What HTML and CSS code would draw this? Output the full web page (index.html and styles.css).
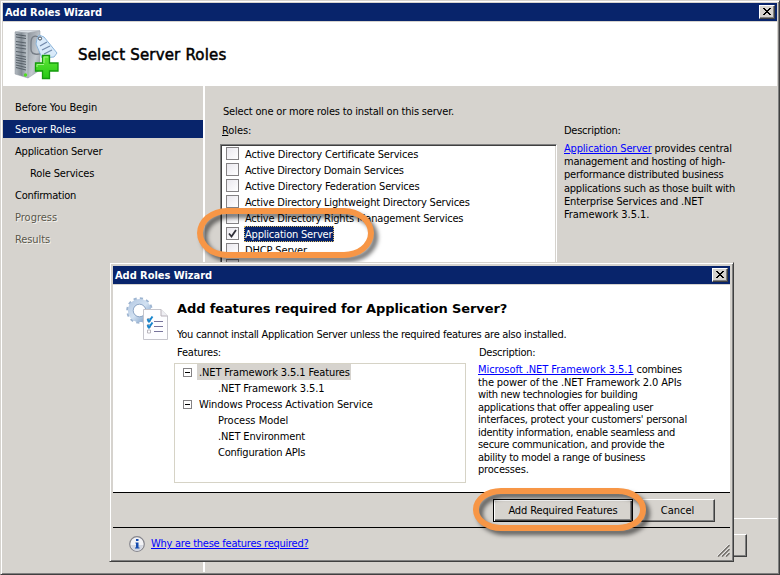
FILE: index.html
```html
<!DOCTYPE html>
<html lang="en">
<head>
<meta charset="utf-8">
<title>Add Roles Wizard</title>
<link rel="stylesheet" href="styles.css">
</head>
<body>
<div class="window main-window">
  <div class="titlebar"><span class="tr-05">Add Roles Wizard</span>
    <button class="close" aria-label="Close"><svg width="8" height="7" viewBox="0 0 8 7" shape-rendering="crispEdges"><path d="M0 0h2v1h-2zM6 0h2v1h-2zM1 1h2v1h-2zM5 1h2v1h-2zM2 2h4v1h-4zM3 3h2v1h-2zM2 4h4v1h-4zM1 5h2v1h-2zM5 5h2v1h-2zM0 6h2v1h-2zM6 6h2v1h-2z"/></svg></button>
  </div>
  <header class="banner">
    <svg class="server-icon" width="46" height="50" viewBox="0 0 46 50">
      <defs>
        <linearGradient id="front" x2="1" y2="0"><stop offset="0" stop-color="#b4bbc2"/><stop offset=".5" stop-color="#848d95"/><stop offset="1" stop-color="#c9d0d6"/></linearGradient>
        <linearGradient id="side" x2="1" y2="1"><stop offset="0" stop-color="#8f969e"/><stop offset=".6" stop-color="#c3c9cf"/><stop offset="1" stop-color="#858d95"/></linearGradient>
        <linearGradient id="plus" x2="0" y2="1"><stop offset="0" stop-color="#62e83a"/><stop offset="1" stop-color="#25c812"/></linearGradient>
      </defs>
      <path d="M1 2 7 .5H26L14 3z" fill="#dce2e7" stroke="#aab1b8" stroke-width=".5"/>
      <path d="M1 2 14 3V48L1 44z" fill="url(#front)" stroke="#8d959d" stroke-width=".5"/>
      <path d="M14 3 26 1V40L14 48z" fill="url(#side)" stroke="#9299a1" stroke-width=".5"/>
      <path d="M2 4.500 12 6M2 7 12 8.500" stroke="#535c64"/>
      <path d="M2 11.500 12 13M2 14.500 12 16M2 17.500 12 19M2 21.500 12 23M2 25 12 27M2 27.500 12 29.500M2 30 12 32M2 32.500 12 34.500M2 35 12 37.500M2 37.500 12 40" stroke="#59626a" stroke-width="1.200"/>
      <circle cx="11.500" cy="45" r="1.700" fill="#4fdc20"/>
      <path d="M26 8C20 4 17 7 17 13s-1 10 4 11 6-1 8-4" fill="none" stroke="#777e87" stroke-width="1.400"/>
      <path d="M23 9 25 5 30 7 43 23 40 27 28 28 22 14z" fill="#d9eafa" stroke="#8cb5da"/>
      <circle cx="26" cy="8.500" r="1.600" fill="#f8fcff" stroke="#404a57"/>
      <path d="M26 16 33 12M28 20 36 16M30 24 38 20" stroke="#7189aa" stroke-width="1.300"/>
      <path d="M28.500 25.500H35.500V33H44V41H35.500V48.500H28.500V41H21.500V33H28.500z" fill="url(#plus)" stroke="#159b0c" stroke-width="1.300"/>
      <path d="M30 33V27H34M23 37V34.500H30" fill="none" stroke="#a2f585"/>
    </svg>
    <h1 class="banner-title">Select Server Roles</h1>
  </header>
  <div class="body">
    <nav class="steps">
      <div class="step tr-10">Before You Begin</div>
      <div class="step current tr-10">Server Roles</div>
      <div class="step tr-20">Application Server</div>
      <div class="step sub tr-15">Role Services</div>
      <div class="step tr-25">Confirmation</div>
      <div class="step disabled">Progress</div>
      <div class="step disabled tr-10">Results</div>
    </nav>
    <main class="page">
      <div class="content">
        <section class="roles">
          <p class="intro tr-18">Select one or more roles to install on this server.</p>
          <p class="label tr-10"><u>R</u>oles:</p>
          <div class="listbox">
            <div class="row"><i class="check"></i><span class="tr-15">Active Directory Certificate Services</span></div>
            <div class="row"><i class="check"></i><span class="tr-22">Active Directory Domain Services</span></div>
            <div class="row"><i class="check"></i><span class="tr-15">Active Directory Federation Services</span></div>
            <div class="row"><i class="check"></i><span class="tr-20">Active Directory Lightweight Directory Services</span></div>
            <div class="row"><i class="check"></i><span class="tr-20">Active Directory Rights Management Services</span></div>
            <div class="row"><i class="check"><svg width="9" height="9" viewBox="0 0 9 9"><path d="M1 4.500 3.500 7.500 8 1" fill="none" stroke="#303038" stroke-width="1.800"/></svg></i><span class="chosen tr-20">Application Server</span></div>
            <div class="row"><i class="check"></i><span class="tr-15">DHCP Server</span></div>
            <div class="row"><i class="check"></i><span class="tr-15">DNS Server</span></div>
          </div>
        </section>
        <aside class="description">
          <p class="label tr-25">Description:</p>
          <p class="copy">
            <span class="line tr-18"><a>Application Server</a> provides central</span>
            <span class="line tr-25">management and hosting of high-</span>
            <span class="line tr-22">performance distributed business</span>
            <span class="line tr-25">applications such as those built with</span>
            <span class="line tr-15">Enterprise Services and .NET</span>
            <span class="line tr-05">Framework 3.5.1.</span>
          </p>
        </aside>
      </div>
      <footer class="main-footer"><button class="button">&nbsp;</button></footer>
    </main>
  </div>
  <div class="ring ring-role"></div>

  <div class="window dialog">
    <div class="titlebar"><span class="tr-05">Add Roles Wizard</span>
      <button class="close" aria-label="Close"><svg width="8" height="7" viewBox="0 0 8 7" shape-rendering="crispEdges"><path d="M0 0h2v1h-2zM6 0h2v1h-2zM1 1h2v1h-2zM5 1h2v1h-2zM2 2h4v1h-4zM3 3h2v1h-2zM2 4h4v1h-4zM1 5h2v1h-2zM5 5h2v1h-2zM0 6h2v1h-2zM6 6h2v1h-2z"/></svg></button>
    </div>
    <div class="dialog-body">
      <svg class="gear-icon" width="42" height="44" viewBox="0 0 42 44">
        <defs><linearGradient id="gear" x2="1" y2="1"><stop offset="0" stop-color="#b7cbe4"/><stop offset=".5" stop-color="#d3e2f2"/><stop offset="1" stop-color="#7fa0c8"/></linearGradient></defs>
        <circle cx="13.500" cy="13.500" r="12" fill="none" stroke="#9db4d0" stroke-width="2.500" stroke-dasharray="3.140 3.140"/>
        <circle cx="13.500" cy="13.500" r="8.900" fill="none" stroke="url(#gear)" stroke-width="5.400"/>
        <circle cx="13.500" cy="13.500" r="6.300" fill="none" stroke="#7894b9" stroke-width=".8"/>
        <path d="M17.500 12.500H35L41.500 19V42.500H17.500z" fill="#fdfdff" stroke="#c5c5cc"/>
        <path d="M35 12.500V19H41.500" fill="#eeeef3" stroke="#b9b2ba"/>
        <path d="M28 24.500H37M28 29.500H37M28 34.500H37" stroke="#77749c"/>
        <path d="M21.500 21.500h3v3h-3zM21.500 27.500h3v3h-3zM21.500 33h3v3h-3z" fill="none" stroke="#aaa6ad" stroke-width=".8"/>
        <path d="M21.500 22 23 24.500 26.500 19.500M21.500 28 23 30.500 26.500 25.500" fill="none" stroke="#1685cd" stroke-width="2"/>
      </svg>
      <div class="dialog-content">
        <h2 class="dialog-title">Add features required for Application Server?</h2>
        <p class="dialog-intro tr-29">You cannot install Application Server unless the required features are also installed.</p>
        <div class="columns">
          <section class="features">
            <p class="feature-label tr-20">Features:</p>
            <div class="tree">
              <div class="node"><i class="toggle"></i><span class="highlight tr-13">.NET Framework 3.5.1 Features</span></div>
              <div class="node leaf"><span class="tr-13">.NET Framework 3.5.1</span></div>
              <div class="node"><i class="toggle"></i><span class="tr-10">Windows Process Activation Service</span></div>
              <div class="node leaf"><span>Process Model</span></div>
              <div class="node leaf"><span class="tr-13">.NET Environment</span></div>
              <div class="node leaf"><span class="tr-22">Configuration APIs</span></div>
            </div>
          </section>
          <aside class="feature-description">
            <p class="feature-label tr-29">Description:</p>
            <p class="copy">
              <span class="line tr-29"><a class="tr-05">Microsoft .NET Framework 3.5.1</a> combines</span>
              <span class="line tr-13">the power of the .NET Framework 2.0 APIs</span>
              <span class="line tr-32">with new technologies for building</span>
              <span class="line tr-29">applications that offer appealing user</span>
              <span class="line tr-25">interfaces, protect your customers' personal</span>
              <span class="line tr-29">identity information, enable seamless and</span>
              <span class="line tr-29">secure communication, and provide the</span>
              <span class="line tr-29">ability to model a range of business</span>
              <span class="line tr-18">processes.</span>
            </p>
          </aside>
        </div>
      </div>
    </div>
    <div class="actions">
      <button class="button default tr-13">Add Required Features</button>
      <button class="button cancel">Cancel</button>
    </div>
    <footer class="help">
      <svg width="16" height="16" viewBox="0 0 16 16">
        <circle cx="8" cy="8" r="7.300" fill="#f2f2f5" stroke="#85858c" stroke-width="1.200"/>
        <path d="M2 9a6 6 0 0 0 12 0z" fill="#d4d8e2"/>
        <path d="M7 3h2.500v2H7zM6.500 6.500h3V11.500H10.500V12.500H6V11.500H7V7.500H6.500z" fill="#164cb0"/>
      </svg>
      <a class="tr-25">Why are these features required?</a>
      <svg class="grip" width="13" height="13" viewBox="0 0 13 13"><path d="M0 12 12 0M4 12 12 4M8 12 12 8" stroke="#fff" stroke-width="1"/><path d="M1 12.500 12.500 1M5 12.500 12.500 5M9 12.500 12.500 9" stroke="#77746f" stroke-width="1.700"/></svg>
    </footer>
  </div>
  <div class="ring ring-button"></div>
</div>
</body>
</html>
```
FILE: styles.css
```css
* { box-sizing: border-box; }
body, h1, h2, p { margin: 0; }
body {
  width: 780px;
  height: 575px;
  overflow: hidden;
  font: 11px/14px "DejaVu Sans Condensed", "DejaVu Sans", sans-serif;
  color: #000;
}
a { color: #00f; text-decoration: underline; text-underline-offset: 1px; }
i { font-style: normal; }

/* Letter-spacing steps, in hundredths of a pixel */
.tr-05 { letter-spacing: -.05px; }
.tr-10 { letter-spacing: -.1px; }
.tr-13 { letter-spacing: -.13px; }
.tr-15 { letter-spacing: -.15px; }
.tr-18 { letter-spacing: -.18px; }
.tr-20 { letter-spacing: -.2px; }
.tr-22 { letter-spacing: -.22px; }
.tr-25 { letter-spacing: -.25px; }
.tr-29 { letter-spacing: -.29px; }
.tr-32 { letter-spacing: -.32px; }

/* Window frames */
.window {
  display: flex;
  flex-direction: column;
  background: #d6d3ce;
  border: 1px solid;
  border-color: #d6d3ce #404040 #404040 #d6d3ce;
  box-shadow: inset 1px 1px #fff, inset -1px -1px #808080;
}
.main-window { position: relative; width: 780px; height: 575px; padding: 2px; }
.dialog { position: absolute; left: 108px; top: 261px; width: 625px; height: 300px; padding: 3px; }
.titlebar {
  flex: none;
  display: flex;
  align-items: center;
  justify-content: space-between;
  height: 18px;
  padding: 0 2px;
  background: #08246b;
  color: #fff;
  font-weight: bold;
}
.titlebar span { padding-top: 2px; }
.close {
  display: flex;
  align-items: center;
  justify-content: center;
  width: 16px;
  height: 14px;
  padding: 0 1px 1px 0;
  background: #d6d3ce;
  border: 1px solid;
  border-color: #fff #404040 #404040 #fff;
  box-shadow: inset -1px -1px #808080;
}

/* Wizard header */
.banner {
  flex: none;
  display: flex;
  align-items: flex-start;
  height: 65px;
  padding: 8px 0 0 11px;
  background: #fff;
  border-top: 1px solid #d6d3ce;
}
.banner-title {
  margin: 15px 0 0 18px;
  font: 15px/20px "DejaVu Sans", sans-serif;
  letter-spacing: .17px;
  -webkit-text-stroke: .5px #000;
}

/* Wizard body */
.body { flex: 1; display: flex; min-height: 0; }
.steps { width: 202px; padding-top: 12px; border-right: 2px solid #fff; }
.step { height: 18px; margin-bottom: 4px; padding: 2px 0 0 12px; line-height: 16px; }
.step.sub { padding-left: 27px; }
.step.current { background: #08246b; color: #fff; }
.step.disabled { color: #5a574b; text-shadow: 1px 1px #f4f2ee; }
.page { flex: 1; display: flex; flex-direction: column; }
.content { display: flex; height: 432px; padding: 19px 0 0 15px; }
.roles { width: 337px; }
.intro { padding-left: 3px; }
.label { line-height: 14px; }
.roles .label { margin: 5px 0 6px 2px; }
.listbox {
  height: 352px;
  overflow: hidden;
  background: #fff;
  border: 1px solid;
  border-color: #808080 #fff #fff #808080;
  box-shadow: inset 1px 1px #404040, inset -1px -1px #d6d3ce;
  padding: 1px 1px 1px 5px;
}
.row { display: flex; align-items: center; height: 16px; }
.check {
  display: flex;
  align-items: center;
  justify-content: center;
  width: 13px;
  height: 13px;
  margin: 0 5px 1px 0;
  border: 1px solid #848284;
  background: linear-gradient(135deg, #eae8ee, #fff);
}
.row span { padding: 2px 1px 0; line-height: 14px; }
.row .chosen { background: #08246b; color: #fff; outline: 1px dotted #e0bd60; outline-offset: -1px; padding-right: 2px; }
.description { margin: 19px 0 0 7px; }
.copy { display: flex; flex-direction: column; line-height: 13.200px; }
.description .copy { margin-top: 4px; }
.line { white-space: nowrap; }
.main-footer {
  flex: 1;
  display: flex;
  align-items: flex-start;
  justify-content: flex-end;
  padding: 15px 30px 0 0;
  border-top: 1px solid #fff;
}

.button {
  width: 75px;
  height: 23px;
  padding: 1px 0 0;
  font: inherit;
  color: #000;
  background: #d6d3ce;
  border: 1px solid;
  border-color: #fff #404040 #404040 #fff;
  box-shadow: inset -1px -1px #808080;
}

/* Callout rings */
.ring {
  position: absolute;
  border: 6px solid #f79646;
  border-radius: 30px / 25px;
  filter: drop-shadow(4px 4px 2px rgba(0, 0, 0, .55));
  pointer-events: none;
}
.ring-role { left: 196px; top: 207px; width: 177px; height: 50px; }
.ring-button { left: 472px; top: 487px; width: 173px; height: 43px; border-radius: 28px / 21px; }

/* Dialog */
.dialog-body {
  flex: none;
  display: flex;
  height: 208px;
  padding: 12px 0 0 13px;
  background: #fff;
  border-top: 1px solid #d6d3ce;
}
.gear-icon { flex: none; }
.dialog-content { flex: 1; padding-left: 6px; }
.dialog-title {
  margin: 2px 0 0 3px;
  font: bold 13px/20px "DejaVu Sans", sans-serif;
  letter-spacing: -.12px;
  white-space: nowrap;
}
.dialog-intro { margin: 9px 0 0 3px; line-height: 14px; white-space: nowrap; }
.columns { display: flex; margin-top: 4px; }
.features { width: 292px; }
.feature-label { padding-left: 3px; line-height: 14px; }
.tree { height: 120px; margin-top: 3px; border: 1px solid #d6d3c6; }
.node { display: flex; align-items: center; height: 16px; padding-left: 8px; }
.node.leaf { padding-left: 43px; }
.node span { padding: 2px 1px 0 2px; line-height: 14px; white-space: nowrap; }
.node.leaf span { padding-left: 0; }
.node .highlight { background: #d6d3ce; }
.toggle {
  width: 9px;
  height: 9px;
  margin-right: 5px;
  border: 1px solid #848284;
  background: linear-gradient(#000, #000) center / 5px 1px no-repeat;
}
.feature-description { margin-left: 10px; }
.feature-description .copy { margin: 4px 0 0 2px; line-height: 12.550px; }
.actions {
  flex: none;
  display: flex;
  gap: 7px;
  height: 36px;
  padding: 6px 15px 0 0;
  justify-content: flex-end;
  border-top: 1px solid #000;
  border-bottom: 1px solid #000;
}
.default {
  width: 140px;
  border-color: #000;
  box-shadow: inset 1px 1px #fff, inset -1px -1px #404040, inset -2px -2px #808080;
}
.cancel { width: 75px; }
.help { flex: 1; display: flex; align-items: center; padding: 2px 0 0 16px; gap: 6px; }
.grip { align-self: flex-end; margin-left: auto; margin-bottom: 1px; }
```
